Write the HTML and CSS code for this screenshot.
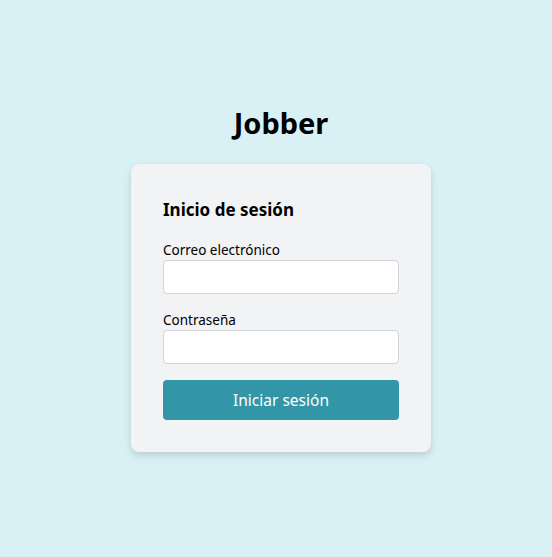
FILE: index.html
```html
<!DOCTYPE html>
<html lang="es">
<head>
<meta charset="utf-8">
<title>Jobber</title>
<link rel="stylesheet" href="styles.css">
</head>
<body>
<main class="page">
  <h1 class="brand">Jobber</h1>
  <form class="card">
    <h2 class="card-title">Inicio de sesión</h2>
    <label class="field">
      <span class="field-label">Correo electrónico</span>
      <input class="field-input" type="email">
    </label>
    <label class="field">
      <span class="field-label">Contraseña</span>
      <input class="field-input" type="password">
    </label>
    <button class="submit" type="button">Iniciar sesión</button>
  </form>
</main>
</body>
</html>
```
FILE: styles.css
```css
* { box-sizing: border-box; }
html, body { margin: 0; height: 100%; }
body {
  background: #d9f0f5;
  font-family: "Noto Sans", "Open Sans", sans-serif;
  color: #000;
}
.page {
  display: flex;
  flex-direction: column;
  align-items: center;
  padding-top: 100px;
  padding-left: 10px;
}
.brand {
  margin: 0 0 19px;
  font-size: 29px;
  line-height: 45px;
  font-weight: 700;
}
.card {
  width: 300px;
  background: #f2f3f5;
  border-radius: 8px;
  padding: 32px;
  box-shadow: 0 4px 10px rgba(0, 0, 0, 0.1), 0 2px 4px rgba(0,0,0,0.05);
  display: flex;
  flex-direction: column;
}
.card-title {
  margin: 0 0 16px;
  font-size: 17px;
  line-height: 28px;
  font-weight: 700;
}
.field {
  display: flex;
  flex-direction: column;
  margin-bottom: 16px;
}
.field-label {
  font-size: 13.5px;
  line-height: 20px;
}
.field-input {
  height: 34px;
  border: 1px solid #d1d5db;
  border-radius: 4px;
  background: #fff;
  margin: 0;
}
.submit {
  height: 40px;
  border: 0;
  border-radius: 4px;
  background: #3296a8;
  color: #fff;
  font-family: inherit;
  font-size: 15.5px;
}
```
